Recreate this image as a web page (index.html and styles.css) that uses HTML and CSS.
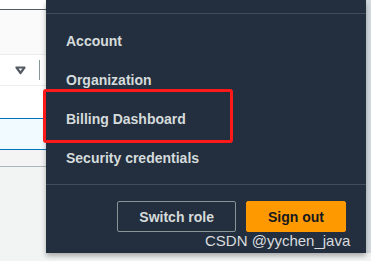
FILE: index.html
```html
<!DOCTYPE html>
<html lang="en">
  <head>
    <meta charset="UTF-8" />
    <meta name="viewport" content="width=device-width, initial-scale=1.0" />
    <title>Account menu</title>
    <link rel="stylesheet" href="styles.css">
  </head>
  <body>
    <div class="page">
      <div class="content">
        <div class="row rowTop"><span class="clipText">Find resources</span></div>
        <div class="row rowFilter"></div>
        <div class="row rowHead">
          <svg class="sortIcon" width="11" height="9" viewBox="0 0 11 9">
            <polygon points="1.5,1.5 9.5,1.5 5.5,7" fill="none" stroke="#545b64" stroke-width="2.2" stroke-linejoin="round" />
          </svg>
          <span class="colDivider"></span>
        </div>
        <div class="row rowBlank"></div>
        <div class="row rowSelected"></div>
        <div class="row rowFoot"></div>
      </div>
      <div class="sideStrip"></div>

      <!-- account dropdown -->
      <div class="menu">
        <div class="menuHead"></div>
        <ul class="menuList">
          <li>Account</li>
          <li>Organization</li>
          <li>Billing Dashboard</li>
          <li>Security credentials</li>
        </ul>
        <div class="menuFoot">
          <button class="btn btnNormal">Switch role</button>
          <button class="btn btnPrimary">Sign out</button>
        </div>
      </div>

      <div class="markBox"></div>
      <div class="watermark">CSDN @yychen_java</div>
    </div>
  </body>
</html>
```

FILE: styles.css
```css
body {
  margin: 0;
  background: #f2f3f3;
  font-family: "Liberation Sans", Arial, sans-serif;
  overflow: hidden;
}

.page {
  position: relative;
  display: flex;
  width: 371px;
  height: 261px;
}

.content {
  flex: 1;
}

.sideStrip {
  width: 5px;
  height: 253px;
  background: #d3dadf;
}

.row {
  box-sizing: border-box;
}

.rowTop {
  height: 10px;
  background: #fff;
  border-bottom: 1px solid #545b64;
  overflow: hidden;
}

.clipText {
  display: block;
  margin-top: -12px;
  font-size: 14px;
  line-height: 14px;
  color: #6b7b8c;
}

.rowFilter {
  height: 45px;
  background: #fafafa;
  border-bottom: 1px solid #eaeded;
}

.rowHead {
  height: 31px;
  background: #fff;
  border-bottom: 1px solid #eaeded;
  display: flex;
  align-items: center;
  padding-left: 15px;
}

.sortIcon {
  display: block;
}

.colDivider {
  width: 1px;
  height: 20px;
  margin-left: 13px;
  background: #879596;
}

.rowBlank {
  height: 32px;
  background: #fff;
}

.rowSelected {
  height: 32px;
  background: #f1faff;
  border-top: 1px solid #0073bb;
  border-bottom: 1px solid #0073bb;
}

.rowFoot {
  height: 17px;
  background: #f4f4f4;
  border-bottom: 1px solid #aab7b8;
}

.menu {
  position: absolute;
  left: 46px;
  top: 0;
  width: 320px;
  height: 253px;
  background: #232f3e;
  box-shadow: 0 3px 5px rgba(0, 0, 0, 0.3);
  color: #d5dbdb;
  display: flex;
  flex-direction: column;
}

.menuHead {
  height: 13px;
  border-bottom: 1px solid #414d5c;
}

.menuList {
  list-style: none;
  margin: 0;
  padding: 8px 20px 6px;
  border-bottom: 1px solid #414d5c;
}

.menuList li {
  height: 39px;
  line-height: 39px;
  font-size: 14px;
  font-weight: bold;
}

.menuFoot {
  display: flex;
  justify-content: flex-end;
  gap: 10px;
  padding: 16px 20px 0;
}

.btn {
  height: 31px;
  padding: 0 21px;
  border-radius: 2px;
  font-family: inherit;
  font-size: 14px;
  font-weight: bold;
}

.btnNormal {
  background: transparent;
  border: 1px solid #879596;
  color: #d5dbdb;
}

.btnPrimary {
  background: #ff9900;
  border: 1px solid #ff9900;
  color: #16191f;
}

.markBox {
  position: absolute;
  left: 43px;
  top: 89px;
  width: 184px;
  height: 48px;
  border: 3px solid #ff1a1a;
  border-radius: 3px;
}

.watermark {
  position: absolute;
  left: 205px;
  top: 232px;
  font-size: 15px;
  line-height: 17px;
  color: #d9dcdf;
}
```
